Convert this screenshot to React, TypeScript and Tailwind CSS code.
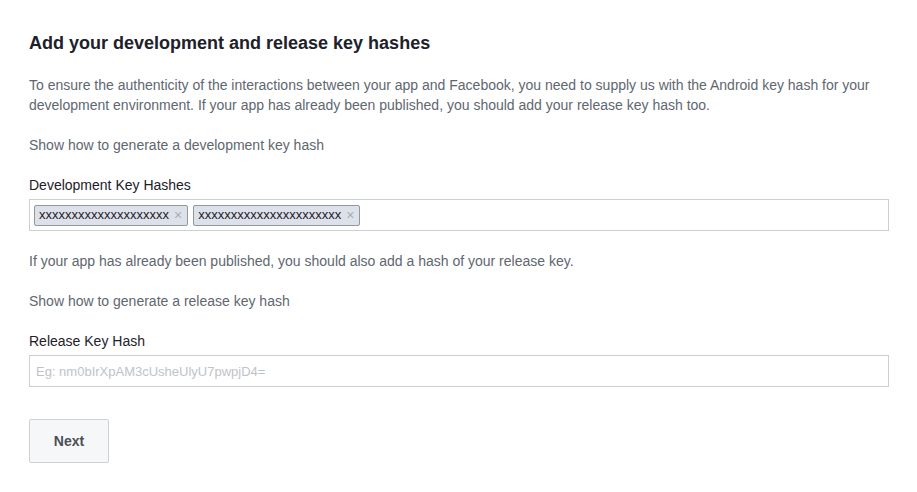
import React from 'react';

const tokens = ['xxxxxxxxxxxxxxxxxxxx', 'xxxxxxxxxxxxxxxxxxxxxx'];

export default function App() {
  return (
    <div className="min-h-screen bg-white font-['Liberation_Sans',Arial,sans-serif] text-[14px]">
      <div className="pl-[29px] pr-[29px] pt-[31px] w-[917px]">
        <h1 className="text-[18px] leading-[24px] font-bold text-[#1d2129]">
          Add your development and release key hashes
        </h1>

        <p className="mt-[20px] leading-[20px] text-[#606770]">
          To ensure the authenticity of the interactions between your app and Facebook, you need to supply us with the Android key hash for your development environment. If your app has already been published, you should add your release key hash too.
        </p>

        <div className="mt-[20px] leading-[20px] text-[#606770]">Show how to generate a development key hash</div>

        <label className="block mt-[20px] leading-[20px] text-[#1d2129]">Development Key Hashes</label>
        <div className="mt-[4px] h-[32px] w-[860px] border border-[#ccd0d5] flex items-center gap-[5px] px-[4px]">
          {tokens.map((t) => (
            <span
              key={t}
              className="flex items-center h-[21px] pl-[4px] pr-[5px] gap-[5px] bg-[#dde1ea] border border-[#9197a3] rounded-[2px] text-[13px] text-[#1d2129]"
            >
              {t}
              <span className="text-[#a8adb7] text-[14px] leading-none">×</span>
            </span>
          ))}
        </div>

        <p className="mt-[20px] leading-[20px] text-[#606770]">
          If your app has already been published, you should also add a hash of your release key.
        </p>

        <div className="mt-[20px] leading-[20px] text-[#606770]">Show how to generate a release key hash</div>

        <label className="block mt-[20px] leading-[20px] text-[#1d2129]">Release Key Hash</label>
        <input
          className="mt-[4px] block h-[32px] w-[860px] border border-[#ccd0d5] px-[6px] text-[13px] outline-none placeholder:text-[#bec3c9]"
          placeholder="Eg: nm0bIrXpAM3cUsheUlyU7pwpjD4="
        />

        <button className="mt-[32px] h-[44px] w-[80px] border border-[#ced0d4] bg-[#f6f7f9] rounded-[2px] font-bold text-[#4b4f56] text-[14px]">
          Next
        </button>
      </div>
    </div>
  );
}
